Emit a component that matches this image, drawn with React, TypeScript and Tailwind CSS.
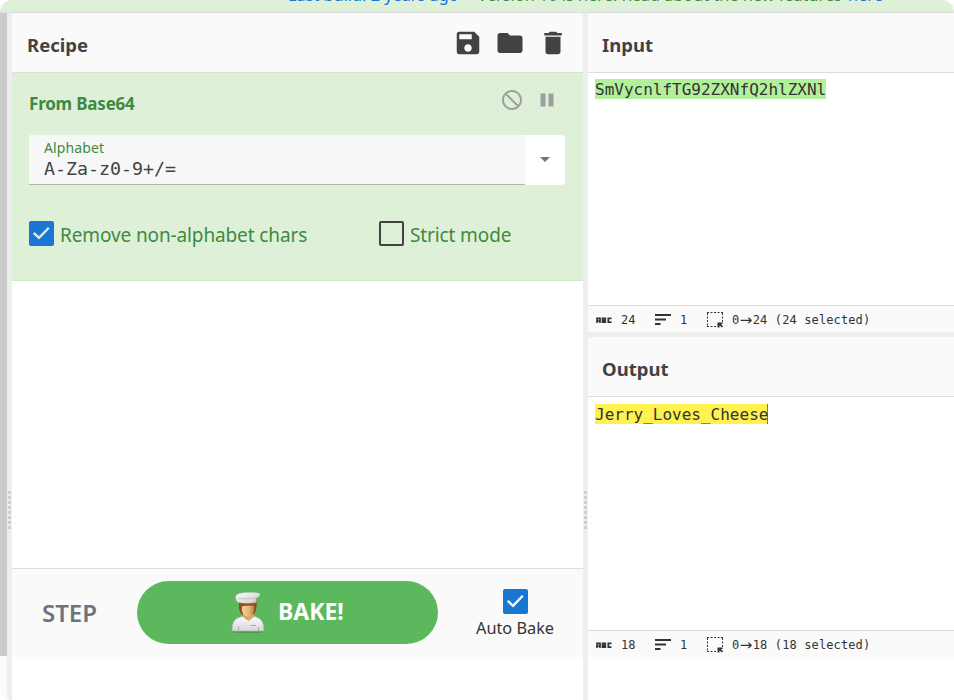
import React from "react";

const sans = "font-['Noto_Sans','Open_Sans',sans-serif]";
const mono = "font-['DejaVu_Sans_Mono','Liberation_Mono',monospace]";

function Gutter() {
  return (
    <div className="flex w-[5px] shrink-0 flex-col items-center bg-[#eeeeee] pt-[478px]">
      <div className="flex flex-col gap-[2px]">
        {[0, 1, 2, 3, 4, 5, 6, 7].map((i) => (
          <div key={i} className="h-[3px] w-[3px] bg-[#cfcfcf]" />
        ))}
      </div>
    </div>
  );
}

function Tick({ stroke }: { stroke: string }) {
  return (
    <div className="h-[25px] w-[25px] shrink-0 rounded-[2px] bg-[#1976d2]">
      <svg viewBox="0 0 25 25" className="h-[25px] w-[25px]" fill="none">
        <path d="M4.7 11.8L10 16.8L19.8 6.8" stroke={stroke} strokeWidth="2.3" />
      </svg>
    </div>
  );
}

function Chef() {
  return (
    <svg viewBox="0 0 34 42" className="h-[42px] w-[34px] shrink-0">
      <defs>
        <linearGradient id="coat" x1="0" y1="0" x2="0" y2="1">
          <stop offset="0" stopColor="#ffffff" />
          <stop offset="1" stopColor="#d4d4dc" />
        </linearGradient>
        <linearGradient id="face" x1="0" y1="0" x2="1" y2="0">
          <stop offset="0" stopColor="#f4cf94" />
          <stop offset="0.5" stopColor="#e8bd80" />
          <stop offset="1" stopColor="#b98445" />
        </linearGradient>
        <linearGradient id="hat" x1="0" y1="0" x2="1" y2="1">
          <stop offset="0" stopColor="#ffffff" />
          <stop offset="1" stopColor="#c9c9c9" />
        </linearGradient>
      </defs>
      <ellipse cx="17" cy="39.7" rx="16.5" ry="1.4" fill="#3f873f" opacity="0.6" />
      <path d="M1.200 39C.8 31 3.500 26.500 9.500 25L13 23.500H22L25 25C31 27 33 31 32.700 39Z" fill="url(#coat)" stroke="#b4b4bc" strokeWidth=".7" />
      <path d="M8 11C7.500 18 9 21 12 23H22C25 20 26 16 25.500 10Z" fill="#8b4c1c" />
      <path d="M11 24.500L13 21H21L23.500 24.500L17.500 29Z" fill="#d8a762" />
      <path d="M11 13.500H23C24 18 22 24.500 17 24.500C12 24.500 10 19 11 13.500Z" fill="url(#face)" />
      <path d="M8 11L25 10V13C20 13.500 14 13 11 14.500L9 18Z" fill="#8f5020" />
      <path d="M5.500 8C3.500 6 4.500 2.200 8.500 1.400C14 .2 22 .1 28 1.200C30.200 2.500 28.500 5 25 6L24.800 10.500C19 11.800 11 11.500 6 9.800Z" fill="url(#hat)" stroke="#bdbdbd" strokeWidth=".4" />
      <path d="M7 6C12 7.500 20 6.700 26 5.800" stroke="#bcbcbc" strokeWidth=".8" fill="none" />
      <path d="M7.500 34V39M27.500 35V39M19 33.500H25" stroke="#a5a5ad" strokeWidth=".9" />
    </svg>
  );
}

function Status({ count }: { count: string }) {
  return (
    <div className={`${mono} flex h-[27px] shrink-0 items-center border-t border-[#dddddd] bg-[#fafafa] pl-[8px] pt-[2px] text-[12px] text-[#333]`}>
      <svg viewBox="0 0 16 16" className="h-4 w-4 shrink-0" fill="none" stroke="#333" strokeWidth="1.7">
        <path d="M1 11V6.300H4V11M1 9H4M6.500 6.300H9.300V10.200H6.500ZM6.500 8.300H9.300M15.500 6.300H12.300V10.200H15.500" />
      </svg>
      <span className="ml-[9px] w-[34px]">{count}</span>
      <svg viewBox="0 0 16 16" className="h-4 w-4 shrink-0" fill="#333">
        <path d="M0 2H16V4H0ZM0 6.500H11V8.500H0ZM0 11H5.500V13H0Z" />
      </svg>
      <span className="ml-[9px] w-[27px]">1</span>
      <svg viewBox="0 0 16 16" className="h-4 w-4 shrink-0" fill="none" stroke="#333">
        <path d="M0 .5H16M0 14.500H10M.5 1V15M15.500 1V10" strokeDasharray="2 1.5" />
        <path d="M10.500 10.500H15.500V12H14L16 14.500L15 15.500L12.500 13.500V15.500H10.500Z" fill="#333" stroke="none" />
      </svg>
      <span className="ml-[9px]">0</span>
      <span className="flex w-[13.500px] justify-center font-['DejaVu_Sans'] text-[15px] leading-[12px]">→</span>
      <span className="whitespace-pre tracking-[0.12px]">{count} ({count} selected)</span>
    </div>
  );
}

function Title({ children }: { children: React.ReactNode }) {
  return <h2 className="text-[18.500px] font-bold leading-[24px] text-[#424242]">{children}</h2>;
}

export default function App() {
  return (
    <div className={`${sans} h-[700px] w-[954px] overflow-hidden bg-white`}>
      <div className="flex h-full flex-col overflow-hidden rounded-[12px]">
        <div className="h-[13px] shrink-0 overflow-hidden border-b border-[#dddddd] bg-[#dff0d8]">
          <div className="-mt-[16px] flex whitespace-pre pl-[288px] text-[16.300px] leading-[22px]">
            <span className="w-[180px] text-[#1976d2]">Last build: 2 years ago</span>
            <span className="w-[380px] text-[#3c8b40]">- Version 10 is here! Read about the new features </span>
            <span className="text-[#1976d2]">here</span>
          </div>
        </div>
        <div className="flex min-h-0 flex-1">
          <div className="w-[7px] shrink-0 bg-[#fafafa]">
            <div className="h-[643px] bg-[#cbcbcb]" />
          </div>
          <Gutter />
          <main className="flex w-[571px] shrink-0 flex-col">
            <div className="flex h-[60px] shrink-0 items-center border-b border-[#dddddd] bg-[#fafafa] pl-[15px] pt-[5px]">
              <Title>Recipe</Title>
              <div className="ml-auto mr-[16px] flex items-center gap-[13px] pb-[5px] text-[#424242]">
                <svg viewBox="0 0 24 24" className="h-[30px] w-[30px]" fill="currentColor"><path d="M17 3H5c-1.11 0-2 .9-2 2v14c0 1.1.89 2 2 2h14c1.1 0 2-.9 2-2V7l-4-4zm-5 16c-1.66 0-3-1.34-3-3s1.34-3 3-3 3 1.34 3 3-1.34 3-3 3zm3-10H5V5h10v4z" /></svg>
                <svg viewBox="0 0 24 24" className="-ml-[1px] h-[30px] w-[30px]" fill="currentColor"><path d="M10 4H4c-1.1 0-1.99.9-1.99 2L2 18c0 1.1.9 2 2 2h16c1.1 0 2-.9 2-2V8c0-1.1-.9-2-2-2h-8l-2-2z" /></svg>
                <svg viewBox="0 0 24 24" className="-mr-[1px] h-[30px] w-[30px]" fill="currentColor"><path d="M6 19c0 1.1.9 2 2 2h8c1.1 0 2-.9 2-2V7H6v12zM19 4h-3.500l-1-1h-5l-1 1H5v2h14V4z" /></svg>
              </div>
            </div>
            <section className="h-[208px] shrink-0 border-b border-[#d0e9c6] bg-[#dff0d8] px-[17px] text-[#3c8b40]">
              <div className="flex h-[62px] items-center">
                <h3 className="text-[17px] font-bold tracking-[-0.200px]">From Base64</h3>
                <div className="ml-auto mr-[7px] flex items-center gap-[11px] pb-[9px] text-[#9e9e9e]">
                  <svg viewBox="0 0 24 24" className="h-6 w-6 -scale-x-100" fill="currentColor"><path d="M12 2C6.480 2 2 6.480 2 12s4.480 10 10 10 10-4.480 10-10S17.520 2 12 2zM4 12c0-4.420 3.580-8 8-8 1.850 0 3.550.63 4.900 1.690L5.690 16.900C4.630 15.550 4 13.850 4 12zm8 8c-1.850 0-3.550-.63-4.900-1.690L18.310 7.100C19.370 8.450 20 10.150 20 12c0 4.420-3.580 8-8 8z" /></svg>
                  <svg viewBox="0 0 24 24" className="h-6 w-6" fill="currentColor"><path d="M5.500 5.500h5v13h-5zM13.500 5.500h5v13h-5z" /></svg>
                </div>
              </div>
              <div className="flex h-[50px] w-[536px]">
                <div className="w-[496px] border-b border-[#b3b5b3] bg-[#f7f7f7] pl-[15px] pt-[3px]">
                  <div className="text-[14px] leading-[19px] tracking-[0.100px]">Alphabet</div>
                  <div className={`${mono} text-[18.300px] leading-[23px] text-[#424242]`}>A-Za-z0-9+/=</div>
                </div>
                <div className="flex w-[40px] items-center justify-center rounded-r-[4px] bg-white">
                  <svg viewBox="0 0 10 5" className="mb-[1px] h-[5px] w-[10px]" fill="#6c757d"><path d="M0 0H10L5 5Z" /></svg>
                </div>
              </div>
              <div className="flex h-[97px] items-center whitespace-nowrap text-[19px] tracking-[-0.120px]">
                <div className="flex w-[350px] items-center gap-[6px]">
                  <Tick stroke="#dff0d8" />
                  <span className="pt-[3px]">Remove non-alphabet chars</span>
                </div>
                <div className="flex items-center gap-[6px]">
                  <div className="h-[25px] w-[25px] rounded-[2px] border-2 border-[#424242]" />
                  <span className="pt-[3px]">Strict mode</span>
                </div>
              </div>
            </section>
            <div className="h-[287px] shrink-0" />
            <footer className="flex h-[89px] shrink-0 items-start border-t border-[#dddddd] bg-[#fafafa]">
              <button className="ml-[30px] mt-[28px] w-[95px] shrink-0 text-left text-[24px] font-semibold leading-[32px] text-[#6c757d]">STEP</button>
              <button className="mt-[12px] flex h-[63px] w-[301px] shrink-0 items-center rounded-[32px] bg-[#5cb85c] pl-[94px] text-white">
                <Chef />
                <span className="mb-[3px] ml-[13px] text-[23px] font-bold">BAKE!</span>
              </button>
              <div className="mt-[20px] flex w-[154px] shrink-0 flex-col items-center">
                <Tick stroke="#ffffff" />
                <span className="mt-[2px] text-[16.300px] leading-[24px] text-[#333]">Auto Bake</span>
              </div>
            </footer>
          </main>
          <Gutter />
          <aside className="flex min-w-0 flex-1 flex-col">
            <div className="flex h-[60px] shrink-0 items-center border-b border-[#dddddd] bg-[#fafafa] pl-[14px] pt-[5px]"><Title>Input</Title></div>
            <div className={`${mono} h-[232px] shrink-0 pl-[7px] pt-[6px] text-[16px] leading-[22px] text-[#333]`}>
              <span className="inline-block h-[20px] bg-[#b2f09b]">SmVycnlfTG92ZXNfQ2hlZXNl</span>
            </div>
            <Status count="24" />
            <div className="h-[5px] shrink-0 bg-[#eeeeee]" />
            <div className="flex h-[60px] shrink-0 items-center border-b border-[#dddddd] bg-[#fafafa] pl-[14px] pt-[5px]"><Title>Output</Title></div>
            <div className={`${mono} h-[233px] shrink-0 pl-[7px] pt-[7px] text-[16px] leading-[21px] text-[#333]`}>
              <span className="inline-block h-[20px] w-[173px] border-r border-[#777] bg-[#fff24f]">Jerry_Loves_Cheese</span>
            </div>
            <Status count="18" />
          </aside>
        </div>
      </div>
    </div>
  );
}
